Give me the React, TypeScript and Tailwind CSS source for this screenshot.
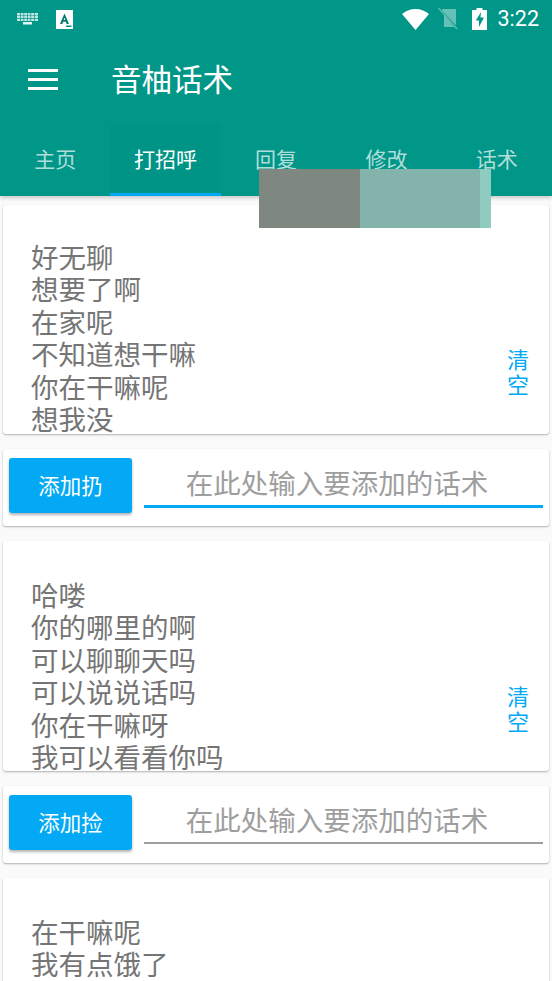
const CJK = "font-['Noto_Sans_CJK_SC','Noto_Sans',sans-serif]";

const TABS = ["主页", "打招呼", "回复", "修改", "话术"];

const SECTIONS = [
  {
    lines: ["好无聊", "想要了啊", "在家呢", "不知道想干嘛", "你在干嘛呢", "想我没"],
    button: "添加扔",
    focused: true,
    cardClass: "h-[229px] pt-[35px]",
    clearClass: "top-[141px]",
  },
  {
    lines: ["哈喽", "你的哪里的啊", "可以聊聊天吗", "可以说说话吗", "你在干嘛呀", "我可以看看你吗"],
    button: "添加捡",
    focused: false,
    cardClass: "h-[230px] pt-[37px]",
    clearClass: "top-[142px]",
  },
];

function StatusBar() {
  return (
    <div className="flex h-[38px] items-center text-white">
      <svg width="22" height="12" viewBox="0 0 22 12" className="ml-[17px] opacity-90" fill="currentColor">
        <path d="M0 0h21v8H0z" opacity=".85" />
        <path d="M6 9h9v2.500H6z" />
        <path d="M0 2.400h21v.7H0zM0 5h21v.7H0zM3 0h.7v8H3zM6.500 0h.7v8h-.7zM10 0h.7v8H10zM13.500 0h.7v8h-.7zM17 0h.7v8H17z" fill="#009688" />
      </svg>
      <svg width="17" height="19" viewBox="0 0 17 19" className="ml-[17px]">
        <path d="M0 0h17v19H0z" fill="#fff" />
        <path d="M8.500 3.500 4 14h2.300l.8-2.200h2.800l.8 2.200H13zM7.700 10l.8-2.600.8 2.600z" fill="#00796b" />
        <path d="M10 15.500h5.500V17H10z" fill="#009688" />
      </svg>
      <svg width="27" height="21" viewBox="0 0 27 21" className="ml-auto" fill="#fff">
        <path d="M13.500 21 0 5C3.500 2 8 0 13.500 0S23.500 2 27 5z" />
      </svg>
      <svg width="20" height="22" viewBox="0 0 20 22" className="ml-[9px]">
        <path d="M4 1h14v16.500L4 2.500z" fill="#fff" opacity=".4" />
        <path d="M6 7 16 19H6z" fill="#fff" opacity=".4" />
        <path d="M0.500 0 19 21" stroke="#fff" strokeOpacity=".35" strokeWidth="1.500" />
      </svg>
      <svg width="15" height="22" viewBox="0 0 15 22" className="ml-[14px]">
        <path d="M4.500 0h6v2H15v20H0V2h4.500z" fill="#fff" />
        <path d="M9 4 3.800 12.500H7V19l5-9.500H8.500z" fill="#009688" />
      </svg>
      <span className="ml-[11px] mr-[13px] font-['Roboto',sans-serif] text-[21.500px] leading-none">3:22</span>
    </div>
  );
}

function Toolbar() {
  return (
    <div className="flex h-[85px] items-center">
      <div className="mb-[2px] ml-[28px] flex w-[30px] flex-col gap-[6px]">
        <div className="h-[3px] bg-white" />
        <div className="h-[3px] bg-white" />
        <div className="h-[3px] bg-white" />
      </div>
      <h1 className={`mb-[4px] ml-[53px] text-[30.500px] leading-none font-normal text-white ${CJK}`}>音柚话术</h1>
    </div>
  );
}

function Tabs() {
  return (
    <div className="grid h-[73px] grid-cols-5">
      {TABS.map((tab, i) => (
        <div
          key={tab}
          className={`flex items-center justify-center pb-[3px] text-[21px] leading-none ${CJK} ${
            i === 1 ? "border-b-[3px] border-[#03a9f4] bg-[#009486] pt-[3px] text-white" : "text-white/70"
          }`}
        >
          {tab}
        </div>
      ))}
    </div>
  );
}

function Section({ lines, button, focused, cardClass, clearClass }: (typeof SECTIONS)[number]) {
  return (
    <>
      <div className={`relative flex overflow-hidden rounded-[3px] bg-white pl-[28px] shadow-[0_1px_2px_rgba(0,0,0,0.3)] ${cardClass}`}>
        <div className={`flex-1 text-[27.500px] leading-[32.400px] text-[#757575] ${CJK}`}>
          {lines.map((line) => (
            <div key={line}>{line}</div>
          ))}
        </div>
        <div className={`absolute right-[20px] flex w-[22px] flex-col ${clearClass}`}>
          <span className={`text-[22px] leading-[24.500px] text-[#03a9f4] ${CJK}`}>清空</span>
        </div>
      </div>
      <div className="flex h-[77px] items-start rounded-[3px] bg-white pt-[9px] pl-[6px] shadow-[0_1px_2px_rgba(0,0,0,0.3)]">
        <button
          className={`h-[55px] w-[123px] rounded-[3px] bg-[#03a9f4] pb-[2px] text-[21.500px] leading-none text-white shadow-[0_2px_3px_rgba(0,0,0,0.3)] ${CJK}`}
        >
          {button}
        </button>
        <div
          className={`mr-[6px] ml-[12px] flex flex-1 items-center justify-center pt-[2px] pr-[13px] text-[27.500px] leading-none text-[#9e9e9e] ${CJK} ${
            focused ? "h-[50px] border-b-[3px] border-[#03a9f4]" : "h-[49px] border-b-[2px] border-[#9e9e9e]"
          }`}
        >
          在此处输入要添加的话术
        </div>
      </div>
    </>
  );
}

export default function App() {
  return (
    <div className="relative h-[981px] w-[552px] overflow-hidden bg-[#fafafa]">
      <header className="relative bg-[#009688] shadow-[0_2px_4px_rgba(0,0,0,0.2)]">
        <StatusBar />
        <Toolbar />
        <Tabs />
      </header>
      <div className="flex flex-col gap-[15px] px-[3px] pt-[9px]">
        {SECTIONS.map((s) => (
          <Section key={s.button} {...s} />
        ))}
        <div className="h-[120px] overflow-hidden rounded-[3px] bg-white pt-[37px] pl-[28px] shadow-[0_1px_2px_rgba(0,0,0,0.3)]">
          <div className={`text-[27.500px] leading-[32.400px] text-[#757575] ${CJK}`}>
            <div>在干嘛呢</div>
            <div>我有点饿了</div>
          </div>
        </div>
      </div>
      {/* redaction blocks over the tabs */}
      <div className="absolute top-[169px] left-[259px] flex h-[59px]">
        <div className="w-[101px] bg-[#7f8781]" />
        <div className="w-[120px] bg-[#84b3ac]" />
        <div className="w-[11px] bg-[#8fcbbf]" />
      </div>
    </div>
  );
}
